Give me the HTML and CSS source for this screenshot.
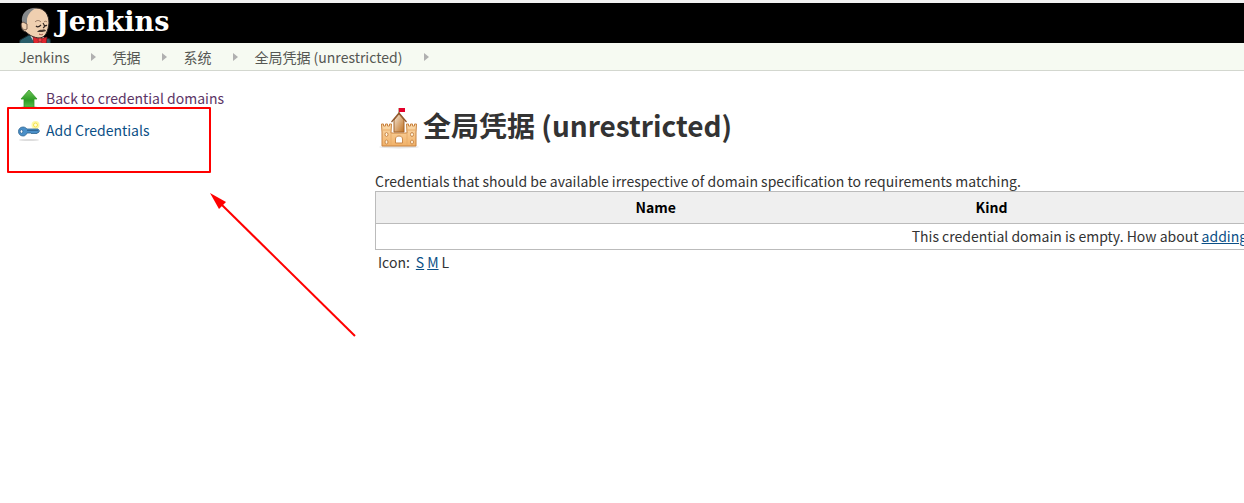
FILE: index.html
```html
<!DOCTYPE html>
<html lang="zh-CN">
<head>
<meta charset="utf-8">
<meta name="viewport" content="width=device-width, initial-scale=1">
<title>全局凭据 (unrestricted) [Jenkins]</title>
<link rel="stylesheet" href="styles.css">
</head>
<body>
<header class="header">
  <a class="brand" href="#">
    <svg class="brand-icon" width="36" height="37" viewBox="0 0 36 37" aria-hidden="true">
      <path d="M1 40 2 34 11 29 25 31 32 33 33 40z" fill="#295c69" stroke="#14252b"/>
      <path d="M12 29 18 40H24L26 31z" fill="#f4f4f4"/>
      <path d="M8 26C3 25 2 19 5 16 4 8 9 2 18 2c9 0 13 7 13 15-1 8-3 14-9 15-6 0-11-3-14-6z" fill="#efcfb0" stroke="#2b2422" stroke-width="1"/>
      <path d="M4 16C3 8 8 2 18 2 12 5 10 9 9 13v5l-2 2z" fill="#85888a"/>
      <path d="M5 16c-3 1-2 7 2 8l2-1V18z" fill="#efcfb0" stroke="#5b4338" stroke-width=".8"/>
      <path d="M17 16c2-2 4-2 6 0M26 16c1-1 2-1 3 0" fill="none" stroke="#8f715c" stroke-width="1"/>
      <path d="M18 20c1 1 3 1 5-1M26 19c1 1 2 1 3 0M25 17c2 3 2 4 0 5" fill="none" stroke="#302421" stroke-width="1.2"/>
      <path d="M19 26c1-1 3-3 5-2 2-1 4 0 4 1-2 1-5 1-9 1z" fill="#46372f"/>
      <path d="M21 28c2 1 3 1 4 0" fill="none" stroke="#9b4c45"/>
      <path d="M15 31 22 33 29 31 28 39 22 36 16 39z" fill="#df252e" stroke="#6d1519" stroke-width=".7"/>
      <circle cx="22" cy="34" r="2" fill="#f04248" stroke="#821c20" stroke-width=".7"/>
    </svg>
    <span class="brand-name">Jenkins</span>
  </a>
</header>

<nav class="breadcrumbs" aria-label="Breadcrumb">
  <a href="#">Jenkins</a><span class="separator"></span>
  <a href="#">凭据</a><span class="separator"></span>
  <a href="#">系统</a><span class="separator"></span>
  <a href="#">全局凭据 (unrestricted)</a><span class="separator"></span>
</nav>

<div class="page">
  <aside class="side-panel">
    <a class="task visited" href="#">
      <svg width="24" height="24" viewBox="0 0 24 24" aria-hidden="true">
        <defs><linearGradient id="leaf" x2="0" y2="1"><stop stop-color="#6fc659"/><stop offset=".6" stop-color="#2d9c25"/><stop offset="1" stop-color="#5abd4b"/></linearGradient></defs>
        <ellipse cx="12" cy="21" rx="8" ry="1.5" fill="#ddd"/>
        <path d="M12 4 20 13H17V21H7V13H4z" fill="url(#leaf)" stroke="#349b28" stroke-width=".8"/>
      </svg>
      <span>Back to credential domains</span>
    </a>
    <a class="task" href="#">
      <svg width="24" height="24" viewBox="0 0 24 24" aria-hidden="true">
        <ellipse cx="12" cy="22" rx="10" ry="1" fill="#ddd"/>
        <circle cx="18.500" cy="7" r="4" fill="#fff9a8"/>
        <circle cx="18.500" cy="7" r="2" fill="#fffde0" stroke="#f5e14d"/>
        <path d="M6 9c2 0 3 1 4 2h11l1.500 2-1.500 2h-1l-1 1-1-1-1 1-1-1-1 1-1-1h-4c-1 2-2 3-4 3-6 0-6-9 0-9z" fill="#4a8fc8" stroke="#2b628f" stroke-width=".8"/>
        <path d="M10 12.500h11" stroke="#285d8a" stroke-width=".8"/>
        <ellipse cx="4.500" cy="13.500" rx="1.300" ry="1.700" fill="#fff" stroke="#245c8d" stroke-width=".7"/>
      </svg>
      <span>Add Credentials</span>
    </a>
  </aside>

  <main class="main-panel">
    <h1 class="title">
      <svg width="48" height="48" viewBox="0 -4 48 48" aria-hidden="true">
        <defs>
          <linearGradient id="wall" x2="0" y2="1"><stop stop-color="#fbdcae"/><stop offset="1" stop-color="#f1b066"/></linearGradient>
          <linearGradient id="tower" x2="1" y2="1"><stop stop-color="#f5eadd"/><stop offset="1" stop-color="#c0701f"/></linearGradient>
        </defs>
        <ellipse cx="24" cy="42" rx="20" ry="1.500" fill="#e5e5e5"/>
        <path d="M24 9V3" stroke="#985b2f"/>
        <path d="M24 3h6v4h-6z" fill="#e4002b"/>
        <path d="M7 41V27l-.500-8h2v2h2v-2h2v2h2v-2h2l-.500 8v1h16v-1l-.500-8h2v2h2v-2h2v2h2v-2h2l-.500 8v14z" fill="url(#wall)" stroke="#c98340"/>
        <path d="M16 28v12M32 28v12M8 25h8M32 25h9" stroke="#e8ad6b"/>
        <path d="M19 27V15l5-6 5 6v12z" fill="url(#tower)" stroke="#a2642c"/>
        <path d="m16.500 17 7.500-9 7.500 9" fill="none" stroke="#8e562b" stroke-width="1.200"/>
        <path d="M20.500 38v-4c0-4 7-4 7 0v4z" fill="#fff" stroke="#c9894b"/>
        <g fill="#fff4df" stroke="#c9894b"><ellipse cx="11.500" cy="29.500" rx="1.500" ry="2"/><ellipse cx="37" cy="29.500" rx="1.500" ry="2"/><ellipse cx="11.500" cy="37" rx="1.500" ry="2"/><ellipse cx="37" cy="37" rx="1.500" ry="2"/></g>
      </svg>
      <span>全局凭据 (unrestricted)</span>
    </h1>
    <p class="description">Credentials that should be available irrespective of domain specification to requirements matching.</p>
    <table class="credentials">
      <colgroup><col class="col-name"><col class="col-kind"><col></colgroup>
      <thead><tr><th scope="col">Name</th><th scope="col">Kind</th><th scope="col">Description</th></tr></thead>
      <tbody><tr><td colspan="3">This credential domain is empty. How about <a href="#">adding some credentials</a>?</td></tr></tbody>
    </table>
    <div class="icon-sizes"><span class="icon-label">Icon:</span><a href="#">S</a><a href="#">M</a><span>L</span></div>
  </main>
</div>

<div class="highlight"></div>
<svg class="arrow" width="148" height="146" viewBox="0 0 148 146" aria-hidden="true">
  <path d="M12 12 145 143" stroke="#f00" stroke-width="2"/>
  <path d="M0 0 16 9 9 16z" fill="#f00"/>
</svg>
</body>
</html>
```

FILE: styles.css
```css
* { box-sizing: border-box; }

body {
  margin: 0;
  overflow: hidden;
  position: relative;
  min-height: 100vh;
  border-top: 3px solid #f0f0f0;
  background: #fff;
  color: #333;
  font: 14px/20px "Noto Sans CJK SC", sans-serif;
}

a { color: #0b4f86; }

.header { display: flex; height: 40px; padding-left: 18px; background: #000; }
.brand { display: flex; gap: 2px; color: #fff; text-decoration: none; }
.brand-icon { display: block; margin-top: 3px; }
.brand-name { font: bold 27px/38px "DejaVu Serif", serif; }

.breadcrumbs {
  display: flex;
  align-items: center;
  height: 28px;
  padding: 0 19px;
  border-bottom: 1px solid #d3d7cf;
  background: #f6faf2;
}
.breadcrumbs a { color: #555753; text-decoration: none; }
.separator {
  margin: 0 16px 0 22px;
  border: 4px solid transparent;
  border-right-width: 0;
  border-left: 5px solid #b0b0b0;
}

.page { display: flex; }
.side-panel {
  display: flex;
  flex: 0 0 375px;
  flex-direction: column;
  gap: 8px;
  padding: 15px 17px;
}
.task { display: flex; align-items: center; gap: 5px; height: 24px; text-decoration: none; }
.task.visited { color: #5c3566; }

.main-panel { flex: 1 0 1530px; padding-top: 30px; }
.title {
  display: flex;
  align-items: center;
  margin: 0 0 22px;
  font-size: 28px;
  line-height: 46px;
}
.description { margin: 0; }

.credentials {
  width: 100%;
  table-layout: fixed;
  border: 1px solid #bbb;
  border-collapse: collapse;
}
.col-name { width: 560px; }
.col-kind { width: 112px; }
.credentials th { height: 32px; padding: 0 0 2px; background: #efefef; color: #000; }
.credentials td { height: 26px; padding: 0 0 2px; border-top: 1px solid #bbb; text-align: center; }

.icon-sizes { display: flex; gap: 3px; padding: 2px 3px; }
.icon-label { margin-right: 3px; }

.highlight {
  position: absolute;
  top: 104px;
  left: 7px;
  width: 204px;
  height: 66px;
  border: 2px solid #f00;
  border-radius: 1px;
}
.arrow { position: absolute; top: 190px; left: 210px; }
```
